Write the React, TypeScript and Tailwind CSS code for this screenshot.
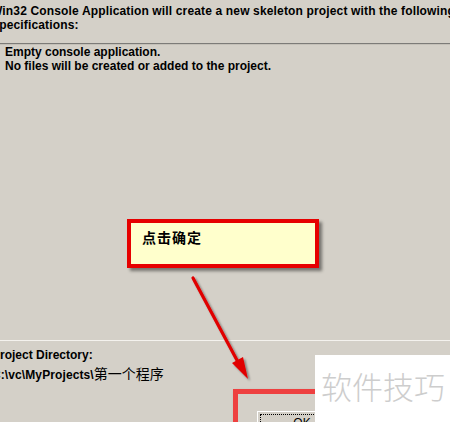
import React from "react";

export default function App() {
  return (
    <div className="relative w-[450px] h-[422px] overflow-hidden bg-[#d4d0c8] font-['Liberation_Sans','Noto_Sans_CJK_SC',sans-serif] text-[12px] leading-[14px] text-black">
      <div className="flex flex-col">
        {/* header */}
        <div className="pt-[4px] ml-[-9px] font-bold whitespace-nowrap tracking-[0.15px]">
          <div>Win32 Console Application will create a new skeleton project with the following</div>
          <div>Specifications:</div>
        </div>
        <div className="mt-[11px] h-[1px] bg-[#7c7b78]" />
        <div className="h-[1px] bg-[#c4c0b8]" />
        {/* content */}
        <div className="pl-[5px] font-bold whitespace-nowrap">
          <div>Empty console application.</div>
          <div>No files will be created or added to the project.</div>
        </div>
        <div className="h-[267px]" />
        <div className="h-[1px] bg-[#f4f2ee]" />
        <div className="pt-[7px] ml-[-8px] whitespace-nowrap">
          <div className="font-bold h-[14px]">Project Directory:</div>
          <div className="mt-[4px] h-[14px] flex items-baseline">
            <span className="font-bold tracking-[0.1px]">C:\vc\MyProjects\</span>
            <span className="text-[14px] font-['Noto_Sans_CJK_SC',sans-serif] font-normal">第一个程序</span>
          </div>
        </div>
        <div className="mt-[31px] ml-[257px] w-[80px] h-[24px] shrink-0 border border-t-white border-l-white border-r-[#404040] border-b-[#404040] bg-[#d4d0c8] p-[2px]">
          <div className="h-full border border-dotted border-black flex items-start justify-center pt-[1px] pl-[10px] text-[12px] leading-[14px]">
            OK
          </div>
        </div>
      </div>

      {/* callout */}
      <div className="absolute left-[127px] top-[219px] w-[192px] h-[49px] border-4 border-[#e60000] bg-[#ffffcc] shadow-[3px_3px_3px_rgba(0,0,0,0.45)] pl-[11px] pt-[5px]">
        <span className="font-['Noto_Sans_CJK_SC',sans-serif] font-bold text-[14px] leading-[18px] tracking-[1px]">点击确定</span>
      </div>

      {/* arrow */}
      <svg className="absolute left-0 top-0" width="450" height="422" viewBox="0 0 450 422">
        <defs>
          <filter id="sh" x="-20%" y="-20%" width="140%" height="140%">
            <feDropShadow dx="2" dy="2" stdDeviation="1.2" floodColor="#000" floodOpacity="0.4" />
          </filter>
        </defs>
        <g filter="url(#sh)">
          <line x1="193" y1="278" x2="239" y2="364" stroke="#e00000" strokeWidth="3.2" strokeLinecap="round" />
          <polygon points="248,379 232,363 243,357" fill="#e00000" />
        </g>
      </svg>

      {/* red highlight box */}
      <div className="absolute left-[233px] top-[389px] w-[140px] h-[70px] border-[5px] border-[#ee4040] shadow-[2px_2px_3px_rgba(0,0,0,0.35)]" />

      {/* watermark */}
      <div className="absolute left-[315px] top-[355px] right-0 bottom-0 bg-white pl-[6px] pt-[13px]">
        <span className="font-['Noto_Sans_CJK_SC',sans-serif] font-light text-[31px] leading-[36px] text-[#cdcdcd] whitespace-nowrap">软件技巧</span>
      </div>
    </div>
  );
}
